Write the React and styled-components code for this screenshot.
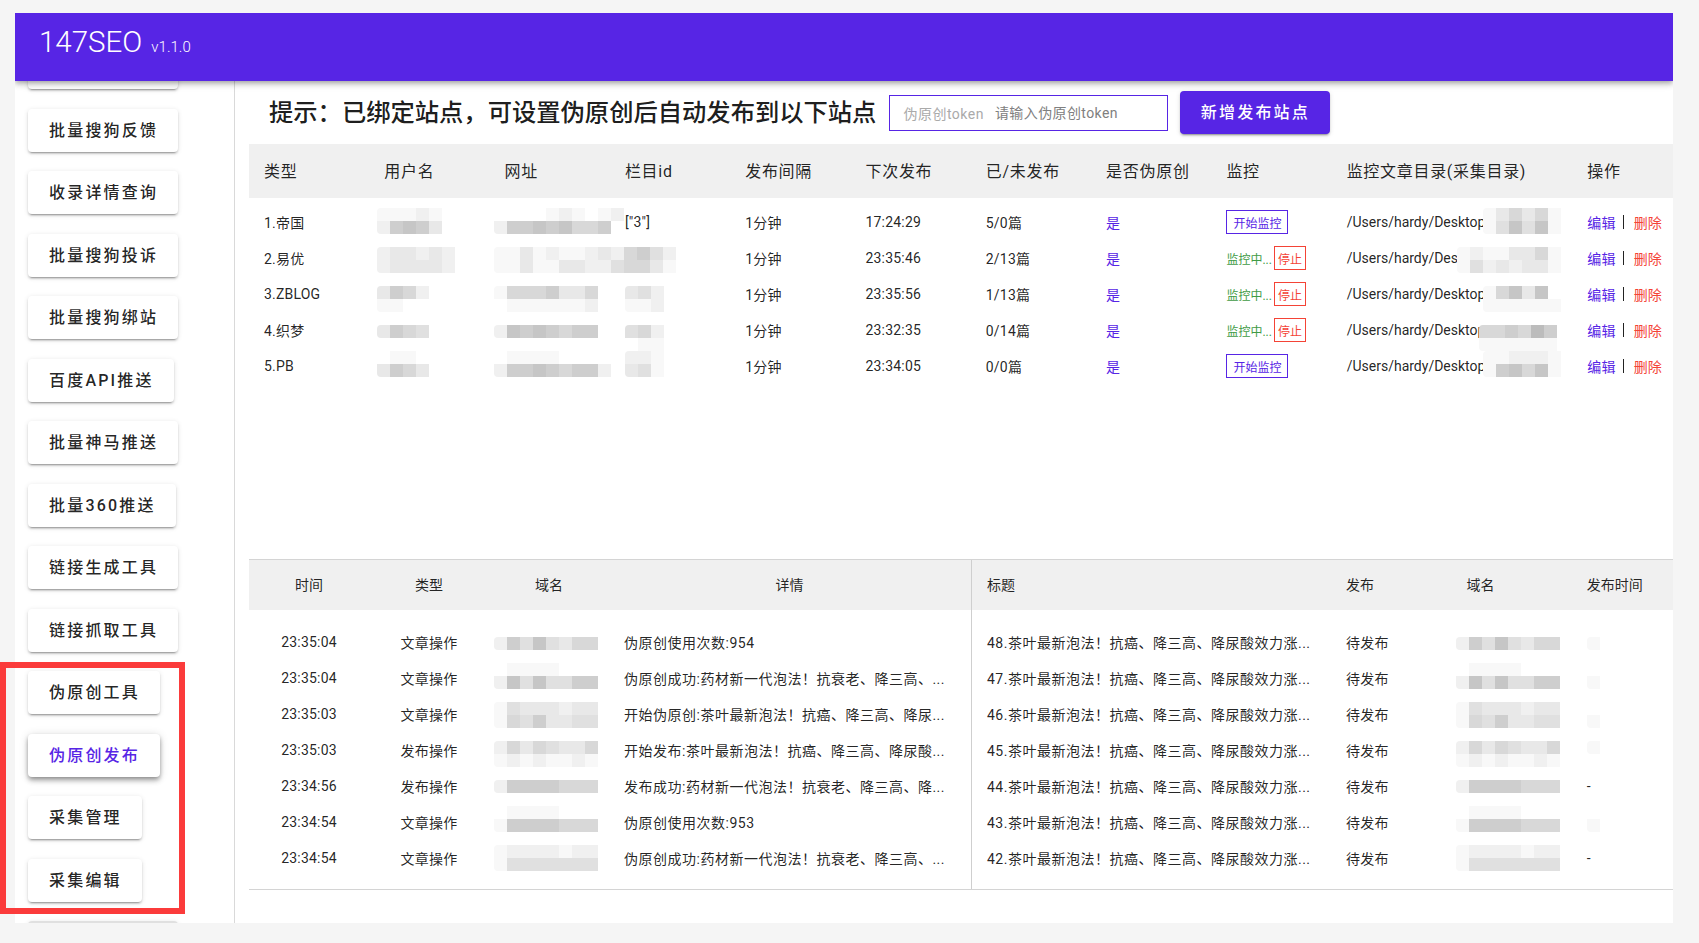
import React from "react";
import styled, { createGlobalStyle } from "styled-components";

const PURPLE = "#5725e5";
const RED = "#f44336";

const GlobalStyle = createGlobalStyle`
  html, body {
    margin: 0;
    padding: 0;
    background: #f5f5f5;
  }
  body {
    font-family: Roboto, "Noto Sans CJK SC", sans-serif;
    color: rgba(0, 0, 0, 0.87);
    overflow: hidden;
  }
`;

const Page = styled.div`
  position: relative;
  width: 1699px;
  height: 943px;
  padding: 13px 26px 20px 15px;
  box-sizing: border-box;
`;

const Shell = styled.div`
  height: 100%;
  display: flex;
  flex-direction: column;
  background: #fff;
  overflow: hidden;
`;

const TopBar = styled.header`
  position: relative;
  z-index: 3;
  flex: none;
  height: 68px;
  padding: 0 0 9px 24px;
  box-sizing: border-box;
  display: flex;
  align-items: baseline;
  line-height: 59px;
  color: #fff;
  background: ${PURPLE};
  box-shadow: 0 2px 4px -1px rgba(0, 0, 0, 0.2), 0 4px 5px rgba(0, 0, 0, 0.14),
    0 1px 10px rgba(0, 0, 0, 0.12);
`;

const Logo = styled.span`
  font-size: 29.5px;
  font-weight: 300;
`;

const Version = styled.span`
  margin-left: 9px;
  font-size: 15px;
  font-weight: 300;
`;

const Body = styled.div`
  flex: 1;
  min-height: 0;
  display: flex;
`;

const Sidebar = styled.nav`
  flex: none;
  width: 220px;
  padding: 0 0 0 13px;
  box-sizing: border-box;
  border-right: 1px solid #d9d9d9;
  overflow: hidden;
`;

const SideList = styled.div`
  margin-top: -35px;
  display: flex;
  flex-direction: column;
  align-items: flex-start;
  gap: 19.5px;
`;

const SideButton = styled.button`
  flex: none;
  height: 43px;
  min-width: ${(p) => (p.$wide ? 150 : 113)}px;
  padding: 0 20px 3px 21px;
  border: 0;
  border-radius: 4px;
  background: ${(p) => (p.$muted ? "#e0e0e0" : "#fff")};
  color: ${(p) => (p.$active ? PURPLE : "rgba(0, 0, 0, 0.87)")};
  font: 500 16px Roboto, "Noto Sans CJK SC", sans-serif;
  letter-spacing: 2.2px;
  white-space: nowrap;
  box-shadow: ${(p) =>
    p.$active
      ? "0 2px 4px -1px rgba(0,0,0,.3), 0 4px 5px rgba(0,0,0,.2), 0 1px 10px rgba(0,0,0,.14)"
      : "0 3px 1px -2px rgba(0,0,0,.2), 0 2px 2px rgba(0,0,0,.14), 0 1px 5px rgba(0,0,0,.12)"};
`;

const Main = styled.main`
  flex: 1;
  min-width: 0;
  overflow: hidden;
`;

const Toolbar = styled.div`
  height: 63px;
  padding-left: 34px;
  display: flex;
  align-items: center;
  gap: 12px;
`;

const Title = styled.h2`
  margin: 0 1px 5px 0;
  font-size: 24.3px;
  font-weight: 500;
  color: rgba(0, 0, 0, 0.9);
  white-space: nowrap;
`;

const TokenBox = styled.label`
  width: 279px;
  height: 36px;
  padding-left: 13px;
  box-sizing: border-box;
  display: flex;
  align-items: center;
  gap: 11px;
  border: 1.5px solid ${PURPLE};
  font-size: 14px;
  letter-spacing: 0.5px;
  color: #aaa;
  white-space: nowrap;
`;

const TokenInput = styled.input`
  flex: 1;
  min-width: 0;
  border: 0;
  outline: 0;
  padding: 0;
  font: 14px Roboto, "Noto Sans CJK SC", sans-serif;
  letter-spacing: 0.4px;
  &::placeholder {
    color: #808080;
    opacity: 1;
  }
`;

const PrimaryButton = styled.button`
  width: 150px;
  height: 43px;
  padding: 0 0 3px;
  border: 0;
  border-radius: 4px;
  background: ${PURPLE};
  color: #fff;
  font: 500 16px Roboto, "Noto Sans CJK SC", sans-serif;
  letter-spacing: 2.2px;
  box-shadow: 0 3px 1px -2px rgba(0,0,0,.2), 0 2px 2px rgba(0,0,0,.14), 0 1px 5px rgba(0,0,0,.12);
`;

const SiteTable = styled.section`
  margin-left: 14px;
  height: 415px;
  width: 1444px;
`;

const siteColumns = "repeat(9, 120.3px) 240.6px 120.3px";

const SiteHead = styled.div`
  height: 54px;
  display: grid;
  grid-template-columns: ${siteColumns};
  align-items: center;
  background: #f0f0f0;
  font-size: 16px;
  letter-spacing: 0.7px;
`;

const SiteBody = styled.div`
  padding-top: 7px;
`;

const SiteRow = styled.div`
  height: 36px;
  display: grid;
  grid-template-columns: ${siteColumns};
  align-items: center;
  font-size: 14px;
  letter-spacing: 0.2px;
`;

const Cell = styled.div`
  position: relative;
  height: 100%;
  padding: 0 0 2px ${(p) => (p.$center ? 0 : 15)}px;
  box-sizing: border-box;
  display: flex;
  align-items: center;
  justify-content: ${(p) => (p.$center ? "center" : "flex-start")};
  white-space: nowrap;
  min-width: 0;
`;

const PathText = styled.span`
  letter-spacing: 0;
`;

const WideText = styled.span`
  letter-spacing: 0.5px;
`;

const LinkText = styled.span`
  color: ${(p) => (p.$red ? RED : PURPLE)};
`;

const Divider = styled.span`
  width: 1px;
  height: 14px;
  margin: 0 10px 0 7px;
  background: #222;
`;

const MonitorButton = styled.span`
  height: 24px;
  padding: 0 ${(p) => (p.$red ? 3 : 6)}px;
  margin-left: ${(p) => (p.$red ? 2 : 0)}px;
  box-sizing: border-box;
  display: inline-flex;
  align-items: center;
  border: 1.5px solid ${(p) => (p.$red ? RED : PURPLE)};
  color: ${(p) => (p.$red ? RED : PURPLE)};
  font-size: 12px;
  letter-spacing: 0;
`;

const Running = styled.span`
  color: #3f9b45;
  font-size: 12px;
  letter-spacing: 0;
`;

const LogPanel = styled.section`
  margin-left: 14px;
  width: 1444px;
  height: 331px;
  display: flex;
  border-top: 1.5px solid #d4d4d4;
  border-bottom: 1.5px solid #d4d4d4;
  box-sizing: border-box;
`;

const LogPane = styled.div`
  flex: none;
  width: ${(p) => p.$width}px;
  ${(p) => p.$divided && "border-right: 1px solid #cfcfcf;"}
`;

const LogHead = styled.div`
  height: 50px;
  display: grid;
  grid-template-columns: ${(p) => p.$columns};
  align-items: center;
  background: #f0f0f0;
  font-size: 14px;
  margin-bottom: 15px;
`;

const LogRow = styled.div`
  height: 36px;
  display: grid;
  grid-template-columns: ${(p) => p.$columns};
  font-size: 14px;
  letter-spacing: 0.2px;
`;

const MosaicGrid = styled.div`
  position: absolute;
  z-index: 1;
  top: ${(p) => p.$top}px;
  left: ${(p) => p.$left}px;
  display: grid;
  grid-auto-rows: 13px;
  grid-template-columns: repeat(${(p) => p.$cols}, 13px);
  border-radius: 4px 0 0 4px;
  overflow: hidden;
`;

const shades = ["transparent", "#f8f8f8", "#f0f0f0", "#e8e8e8", "#e0e0e0", "#d8d8d8", "#cecece", "#c6c6c6", "#bcbcbc"];

const MosaicCell = styled.i`
  display: block;
  background: ${(p) => shades[p.$shade]};
`;

const RedFrame = styled.div`
  position: absolute;
  z-index: 5;
  left: 0;
  top: 662px;
  width: 185px;
  height: 252px;
  box-sizing: border-box;
  border: 6.5px solid #fb3b3b;
  pointer-events: none;
`;

function Mosaic({ top, left, rows }) {
  const cols = rows[0].length;
  return (
    <MosaicGrid $top={top} $left={left} $cols={cols}>
      {rows.join("").split("").map((s, i) => (
        <MosaicCell key={i} $shade={Number(s)} />
      ))}
    </MosaicGrid>
  );
}

const sideItems = [
  "批量搜狗反馈",
  "收录详情查询",
  "批量搜狗投诉",
  "批量搜狗绑站",
  "百度API推送",
  "批量神马推送",
  "批量360推送",
  "链接生成工具",
  "链接抓取工具",
  "伪原创工具",
  "伪原创发布",
  "采集管理",
  "采集编辑",
];

const siteHead = ["类型", "用户名", "网址", "栏目id", "发布间隔", "下次发布", "已/未发布", "是否伪原创", "监控", "监控文章目录(采集目录)", "操作"];

const sites = [
  {
    type: "1.帝国", next: "17:24:29", counts: "5/0篇", running: false, column: '["3"]', top: 3,
    user: ["11121", "26763"],
    url: ["0000121012", "2667675560"],
    path: ["135351", "147471"],
  },
  {
    type: "2.易优", next: "23:35:46", counts: "2/13篇", running: true, top: 6,
    user: ["233232", "233332"],
    url: ["11312112325642", "11311332245531"],
    pathLeft: 125,
    path: ["12113351", "14232331"],
  },
  {
    type: "3.ZBLOG", next: "23:35:56", counts: "1/13篇", running: true, top: 9,
    user: ["3652", "1100"],
    url: ["15556335", "01111112"],
    col: ["342", "112"],
    path: ["157370", "111111"],
  },
  {
    type: "4.织梦", next: "23:32:35", counts: "0/14篇", running: true, top: 12,
    user: ["3654"],
    url: ["27676566"],
    col: ["452", "011"],
    pathLeft: 147,
    path: ["556586", "111111"],
  },
  {
    type: "5.PB", next: "23:34:05", counts: "0/0篇", running: false, column: '["1"]', top: 2,
    user: ["0110", "3653"],
    url: ["011110000", "266765662"],
    col: ["221", "341"],
    path: ["112221", "167571"],
  },
];

const logColumns = "120px 120px 120px 361px";
const publishColumns = "359px 120.4px 120.4px 120.4px";

const logs = [
  { time: "23:35:04", kind: "文章操作", detail: "伪原创使用次数:954", title: "48", top: 12, domain: ["26474355"], stamp: ["1"] },
  { time: "23:35:04", kind: "文章操作", detail: "伪原创成功:药材新一代泡法！抗衰老、降三高、...", title: "47", top: 2, domain: ["01111000", "27474466"], stamp: ["0", "1"] },
  { time: "23:35:03", kind: "文章操作", detail: "开始伪原创:茶叶最新泡法！抗癌、降三高、降尿...", title: "46", top: 5, domain: ["14333233", "15463344"], stamp: ["0", "1"] },
  { time: "23:35:03", kind: "发布操作", detail: "开始发布:茶叶最新泡法！抗癌、降三高、降尿酸...", title: "45", top: 8, domain: ["25354335", "12121121"], stamp: ["1"] },
  { time: "23:34:56", kind: "发布操作", detail: "发布成功:药材新一代泡法！抗衰老、降三高、降...", title: "44", top: 11, domain: ["26666555"], dash: true },
  { time: "23:34:54", kind: "文章操作", detail: "伪原创使用次数:953", title: "43", top: 1, domain: ["01111000", "16666555"], stamp: ["0", "1"] },
  { time: "23:34:54", kind: "文章操作", detail: "伪原创成功:药材新一代泡法！抗衰老、降三高、...", title: "42", top: 4, domain: ["12222122", "14444444"], dash: true },
];

export default function App() {
  return (
    <Page>
      <GlobalStyle />
      <Shell>
        <TopBar>
          <Logo>147SEO</Logo>
          <Version>v1.1.0</Version>
        </TopBar>
        <Body>
          <Sidebar>
            <SideList>
              <SideButton $wide aria-hidden="true" />
              {sideItems.map((name) => (
                <SideButton key={name} $active={name === "伪原创发布"}>
                  {name}
                </SideButton>
              ))}
              <SideButton $muted $wide aria-hidden="true" />
            </SideList>
          </Sidebar>
          <Main>
            <Toolbar>
              <Title>提示：已绑定站点，可设置伪原创后自动发布到以下站点</Title>
              <TokenBox>
                伪原创token
                <TokenInput placeholder="请输入伪原创token" />
              </TokenBox>
              <PrimaryButton>新增发布站点</PrimaryButton>
            </Toolbar>

            <SiteTable>
              <SiteHead>
                {siteHead.map((h) => (
                  <Cell key={h}>{h}</Cell>
                ))}
              </SiteHead>
              <SiteBody>
                {sites.map((s) => (
                  <SiteRow key={s.type}>
                    <Cell>{s.type}</Cell>
                    <Cell><Mosaic top={s.top} left={8} rows={s.user} /></Cell>
                    <Cell><Mosaic top={s.top} left={4} rows={s.url} /></Cell>
                    <Cell>
                      {s.column}
                      {s.col && <Mosaic top={s.top} left={15} rows={s.col} />}
                    </Cell>
                    <Cell>1分钟</Cell>
                    <Cell>{s.next}</Cell>
                    <Cell>{s.counts}</Cell>
                    <Cell><LinkText>是</LinkText></Cell>
                    <Cell>
                      {s.running ? (
                        <>
                          <Running>监控中...</Running>
                          <MonitorButton $red>停止</MonitorButton>
                        </>
                      ) : (
                        <MonitorButton>开始监控</MonitorButton>
                      )}
                    </Cell>
                    <Cell>
                      <PathText>/Users/hardy/Desktop</PathText>
                      <Mosaic top={s.top} left={s.pathLeft || 151} rows={s.path} />
                    </Cell>
                    <Cell>
                      <LinkText>编辑</LinkText>
                      <Divider />
                      <LinkText $red>删除</LinkText>
                    </Cell>
                  </SiteRow>
                ))}
              </SiteBody>
            </SiteTable>

            <LogPanel>
              <LogPane $width={722} $divided>
                <LogHead $columns={logColumns}>
                  <Cell $center>时间</Cell>
                  <Cell $center>类型</Cell>
                  <Cell $center>域名</Cell>
                  <Cell $center>详情</Cell>
                </LogHead>
                {logs.map((l) => (
                  <LogRow key={l.title} $columns={logColumns}>
                    <Cell $center>{l.time}</Cell>
                    <Cell $center>{l.kind}</Cell>
                    <Cell><Mosaic top={l.top} left={5} rows={l.domain} /></Cell>
                    <Cell><WideText>{l.detail}</WideText></Cell>
                  </LogRow>
                ))}
              </LogPane>
              <LogPane $width={722}>
                <LogHead $columns={publishColumns}>
                  <Cell>标题</Cell>
                  <Cell>发布</Cell>
                  <Cell>域名</Cell>
                  <Cell>发布时间</Cell>
                </LogHead>
                {logs.map((l) => (
                  <LogRow key={l.title} $columns={publishColumns}>
                    <Cell><WideText>{l.title}.茶叶最新泡法！抗癌、降三高、降尿酸效力涨...</WideText></Cell>
                    <Cell>待发布</Cell>
                    <Cell><Mosaic top={l.top} left={5} rows={l.domain} /></Cell>
                    <Cell>
                      {l.dash && "-"}
                      {l.stamp && <Mosaic top={l.top} left={15} rows={l.stamp} />}
                    </Cell>
                  </LogRow>
                ))}
              </LogPane>
            </LogPanel>
          </Main>
        </Body>
      </Shell>
      <RedFrame />
    </Page>
  );
}
